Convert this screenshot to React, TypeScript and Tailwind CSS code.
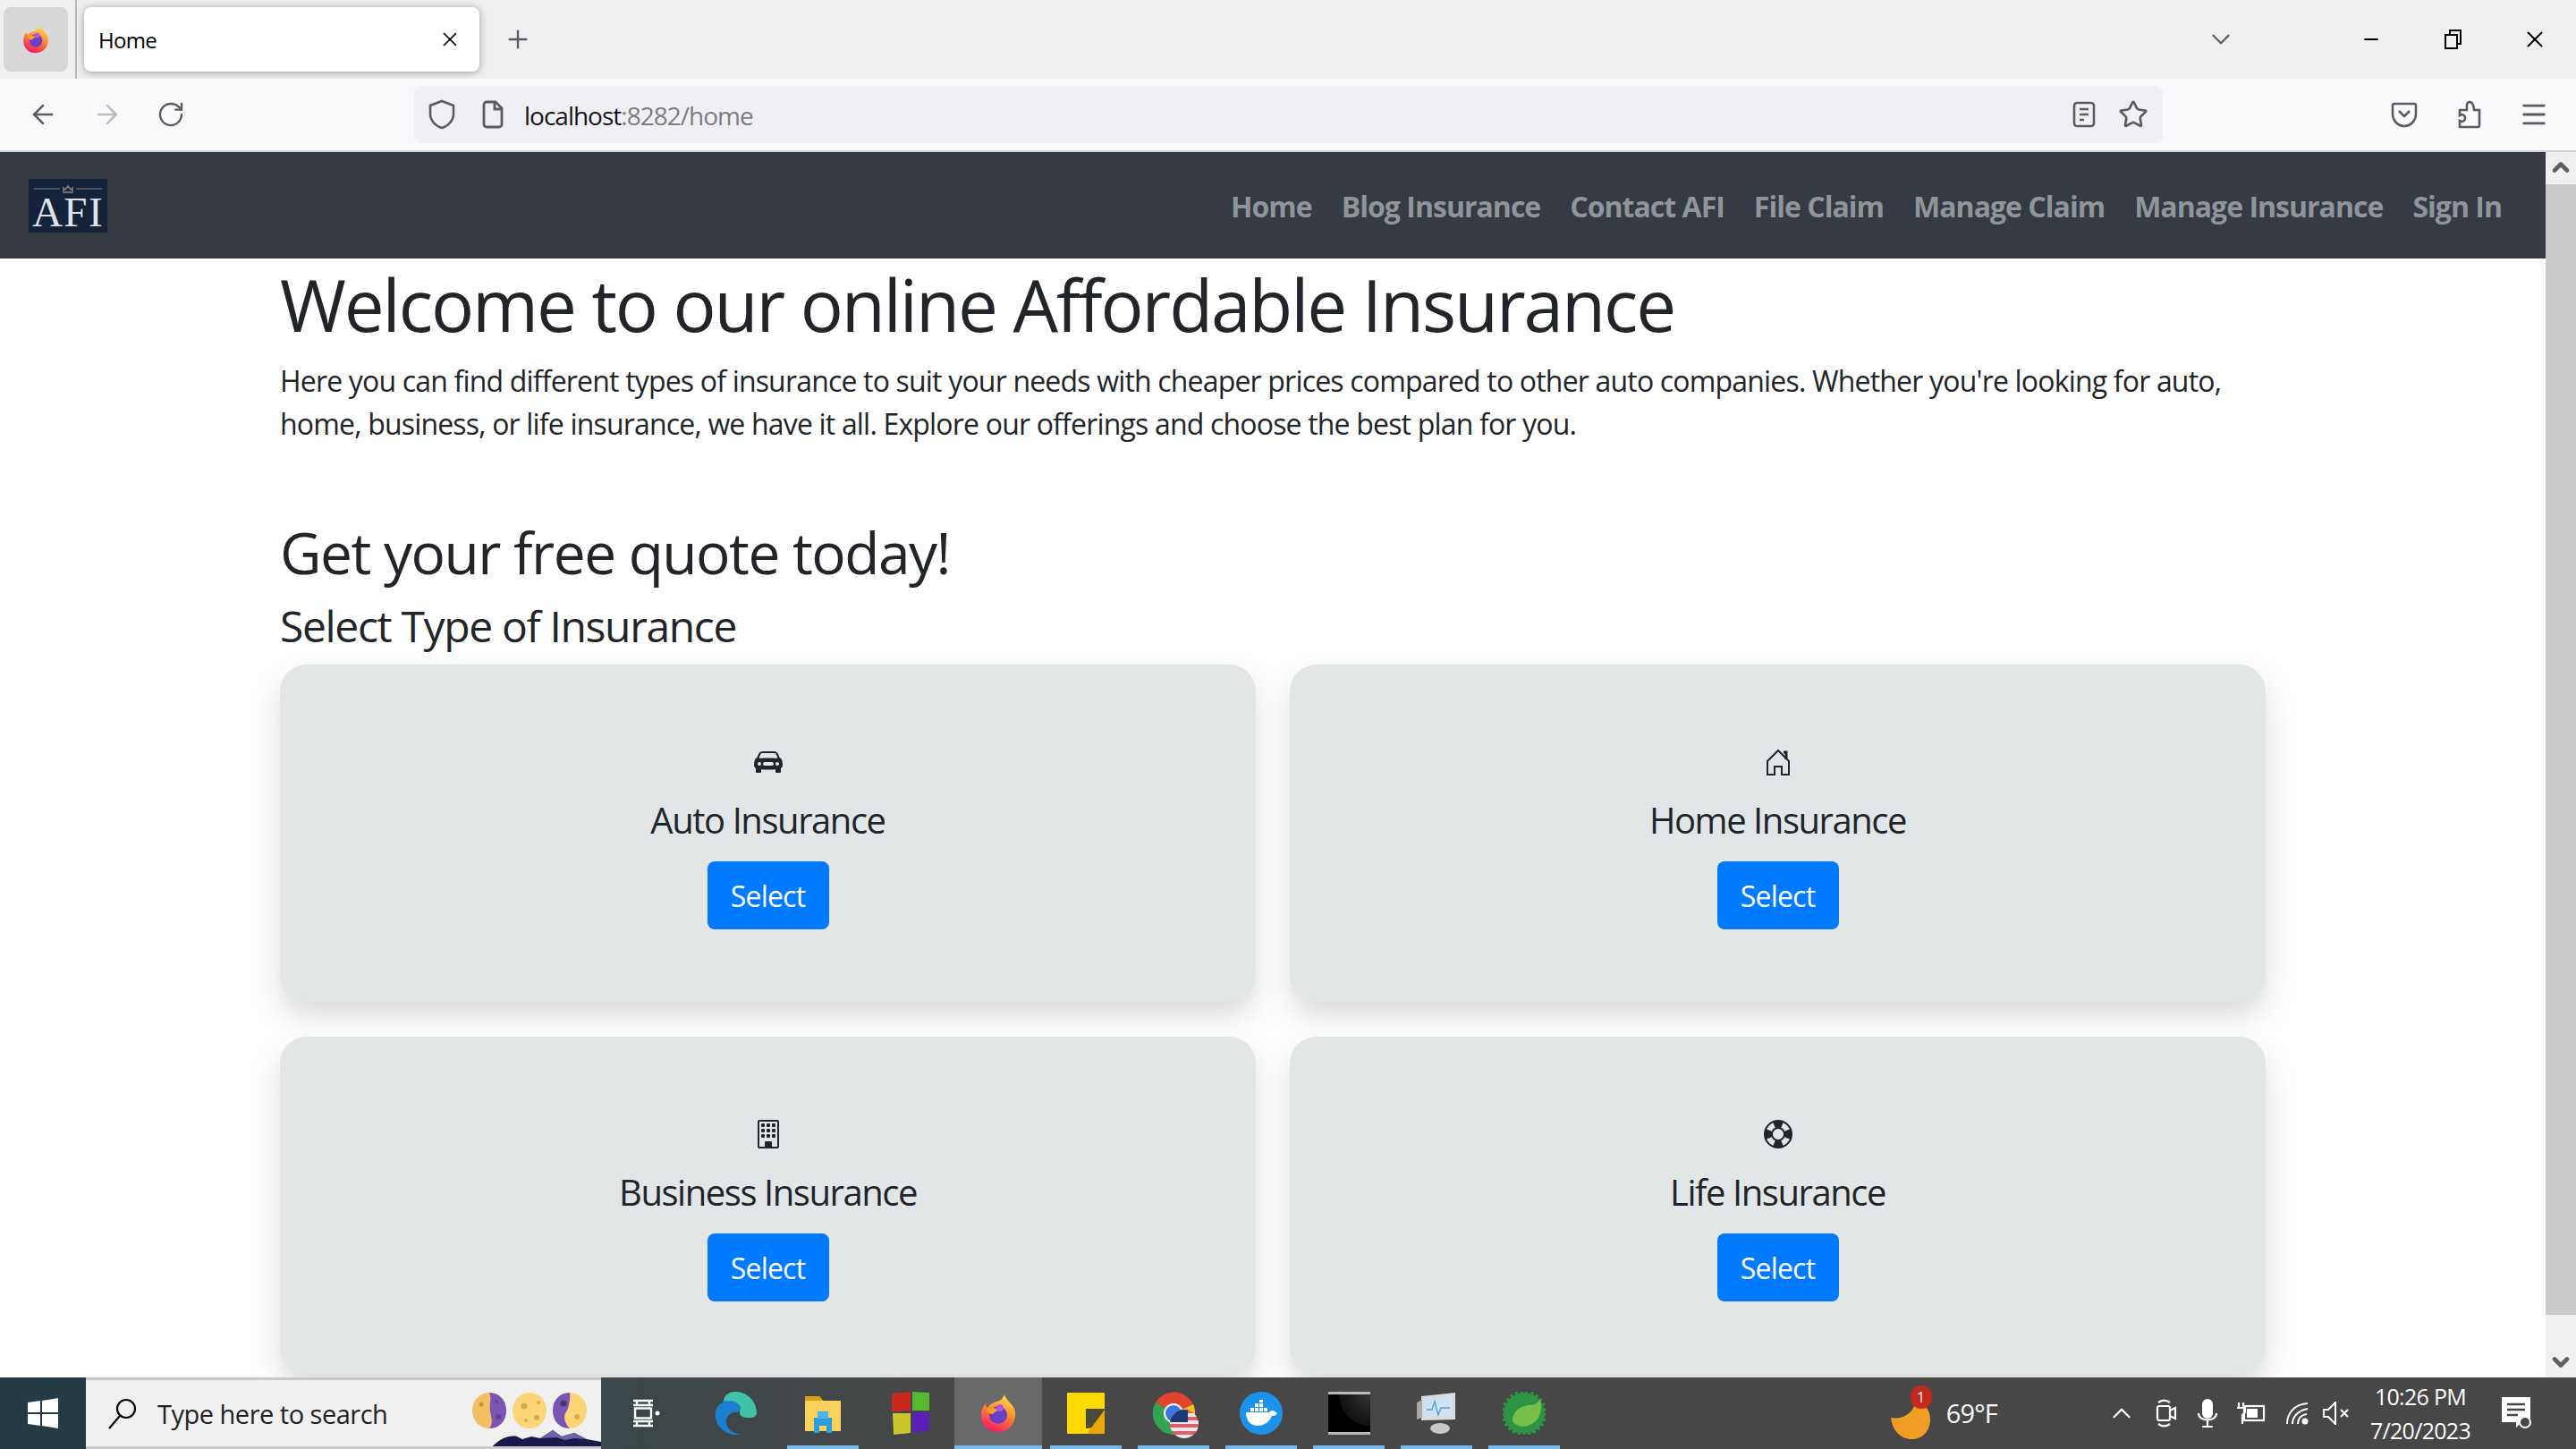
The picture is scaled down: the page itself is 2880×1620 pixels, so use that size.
import React from 'react';
import { ArrowLeft, ArrowRight, RotateCw, Plus, X, ChevronDown, ChevronUp, Minus, Star, Menu } from 'lucide-react';
import { BsCarFrontFill, BsBuilding, BsLifePreserver } from 'react-icons/bs';

const sans = "font-['Open_Sans','Noto_Sans',sans-serif]";

function FirefoxLogo({ size, id }: { size: number; id: string }) {
  return (
    <svg width={size} height={size} viewBox="0 0 44 44">
      <defs>
        <linearGradient id={id} x1="0.7" y1="0" x2="0.3" y2="1">
          <stop offset="0" stopColor="#ffe14a" />
          <stop offset="0.45" stopColor="#ff8a2a" />
          <stop offset="1" stopColor="#f5156c" />
        </linearGradient>
      </defs>
      <path d="M29 1c1 6 8 9 11 16 4 11-3 26-18 26C10 43 2 34 3 23c0-5 2-9 5-12 0 3 1 4 2 5 3-6 12-7 15-9 2-2 3-4 4-6z" fill={`url(#${id})`} />
      <circle cx="22" cy="24" r="10" fill="#6b3fc4" />
      <path d="M8 18c4-3 10-3 14 1-3 1-5 2-6 4-3 0-6-2-8-5z" fill="#ff9a2e" />
      <circle cx="24" cy="16" r="4" fill="#b05bd6" />
    </svg>
  );
}

// bootstrap house-door with the chimney, the react-icons one has lost it
function HouseIcon() {
  return (
    <svg width="32" height="32" viewBox="0 0 32 32" fill="none" stroke="#212529" strokeWidth="2">
      <path d="M16 3L4 15v15h8v-9h8v9h8V15z" />
      <path d="M22 5h3v8" strokeWidth="3" />
    </svg>
  );
}

function TaskCell({ children, active, running }: { children: React.ReactNode; active?: boolean; running?: boolean }) {
  return (
    <div className={`relative flex h-full w-[98px] items-center justify-center ${active ? 'bg-[#696969]' : ''}`}>
      {children}
      {running && <div className={`absolute bottom-0 h-[4px] bg-[#76b9ed] ${active ? 'left-0 w-full' : 'left-[9px] w-[80px]'}`} />}
    </div>
  );
}

function InsuranceCard({ icon, title }: { icon: React.ReactNode; title: string }) {
  return (
    <div className="flex h-[377px] flex-col items-center rounded-[30px] bg-[#e2e6e6] pt-[93px] shadow-[0_16px_32px_rgba(0,0,0,0.15)]">
      <div className="flex h-[32px] items-center text-[32px] text-[#212529]">{icon}</div>
      <h5 className="mt-[25px] text-[40px] leading-[48px] tracking-[-1.45px] text-[#212529]">{title}</h5>
      <button className="mt-[22px] h-[76px] w-[136px] rounded-[8px] bg-[#007bff] pt-[2px] text-[32px] tracking-[-0.8px] text-white">Select</button>
    </div>
  );
}

const navItems = ['Home', 'Blog Insurance', 'Contact AFI', 'File Claim', 'Manage Claim', 'Manage Insurance', 'Sign In'];

export default function App() {
  return (
    <div className={`flex h-[1620px] w-[2880px] flex-col overflow-hidden bg-white ${sans}`}>
      {/* tab strip */}
      <div className="flex h-[88px] shrink-0 items-center bg-[#efeff0]">
        <div className="ml-[4px] flex h-[72px] w-[72px] items-center justify-center rounded-[8px] bg-[#d8d8d8]">
          <FirefoxLogo size={32} id="ffTab" />
        </div>
        <div className="ml-[8px] h-full w-[2px] bg-[#b8b8b8]" />
        <div className="ml-[8px] flex h-[72px] w-[442px] items-center justify-between rounded-[8px] bg-white pl-[16px] pr-[20px] shadow-[0_1px_8px_rgba(0,0,0,0.35)]">
          <span className="pt-[1px] text-[24px] tracking-[-0.7px] text-black">Home</span>
          <X size={26} strokeWidth={1.6} className="text-black" />
        </div>
        <Plus size={32} strokeWidth={1.8} className="ml-[27px] text-[#5b5b66]" />
        <div className="flex-1" />
        <ChevronDown size={34} strokeWidth={1.6} className="mr-[139px] text-[#5b5b66]" />
        <Minus size={24} strokeWidth={2} className="mr-[68px] text-black" />
        <svg width="24" height="24" viewBox="0 0 24 24" fill="none" stroke="black" strokeWidth="2" className="mr-[64px]">
          <rect x="3" y="7" width="13" height="15" />
          <path d="M8 7V2h12v15h-4" />
        </svg>
        <X size={30} strokeWidth={1.6} className="mr-[31px] text-black" />
      </div>

      {/* toolbar */}
      <div className="flex h-[82px] shrink-0 items-center border-b-2 border-[#cfcfd2] bg-[#f9f9fb]">
        <ArrowLeft size={34} strokeWidth={1.8} className="ml-[31px] text-[#5b5b66]" />
        <ArrowRight size={34} strokeWidth={1.8} className="ml-[38px] text-[#bdbdc2]" />
        <RotateCw size={32} strokeWidth={1.8} className="ml-[38px] text-[#5b5b66]" />
        <div className="ml-[256px] flex h-[64px] w-[1955px] items-center rounded-[8px] bg-[#f0f0f4] pl-[15px] pr-[16px]">
          <svg width="32" height="34" viewBox="0 0 32 34" fill="none" stroke="#5b5b66" strokeWidth="2.6">
            <path d="M16 2l13 5v9c0 8-6 14-13 16C9 30 3 24 3 16V7z" />
          </svg>
          <svg width="26" height="32" viewBox="0 0 26 32" fill="none" stroke="#5b5b66" strokeWidth="2.8" className="ml-[28px]">
            <path d="M3 5a3 3 0 0 1 3-3h10l7 7v18a3 3 0 0 1-3 3H6a3 3 0 0 1-3-3z" />
            <path d="M15 2v8h8" />
          </svg>
          <span className="ml-[22px] pt-[2px] text-[28px] tracking-[-1px] text-[#15141a]">
            localhost<span className="text-[#7c7c84]">:8282/home</span>
          </span>
          <div className="flex-1" />
          <svg width="26" height="32" viewBox="0 0 26 32" fill="none" stroke="#5b5b66" strokeWidth="2.6">
            <rect x="2" y="3" width="22" height="26" rx="3" />
            <path d="M8 10h10M8 16h10M8 22h5" />
          </svg>
          <Star size={34} strokeWidth={1.9} className="ml-[25px] text-[#5b5b66]" />
        </div>
        <svg width="30" height="30" viewBox="0 0 30 30" fill="none" stroke="#5b5b66" strokeWidth="2.6" className="ml-[255px]">
          <path d="M4 3h22a2 2 0 0 1 2 2v9c0 8-6 14-13 14S2 22 2 14V5a2 2 0 0 1 2-2z" />
          <path d="M9 11l6 6 6-6" />
        </svg>
        <svg width="30" height="34" viewBox="0 0 30 34" fill="none" stroke="#5b5b66" strokeWidth="2.6" className="ml-[43px]">
          <path d="M4 31h20a2 2 0 0 0 2-2V12h-6c0-3-1-9-5-9s-3 6-3 9H4v6c3-2 6 0 6 3s-3 5-6 3z" />
        </svg>
        <Menu size={34} strokeWidth={2} className="ml-[40px] text-[#5b5b66]" />
      </div>

      {/* page + scrollbar */}
      <div className="flex min-h-0 flex-1">
        <div className="min-w-0 flex-1 overflow-hidden">
          <nav className="flex h-[119px] items-center justify-between bg-[#363a42] pl-[32px] pr-[49px]">
            <div className="flex h-[60px] w-[88px] flex-col items-center bg-[#15233a]">
              <svg width="76" height="12" viewBox="0 0 76 12" className="mt-[5px] shrink-0">
                <path d="M0 6h29M47 6h29" stroke="#5d6067" strokeWidth="1.4" />
                <path d="M33 10V5l2 2 3-4 3 4 2-2v5z" fill="none" stroke="#8b8678" strokeWidth="1.4" />
              </svg>
              <span className="font-['Liberation_Serif',serif] text-[47px] leading-[41px] tracking-[1.5px] text-[#dfe2e6]">AFI</span>
            </div>
            <div className="flex gap-[33px] pt-[2px]">
              {navItems.map((item) => (
                <a key={item} className="text-[32px] font-bold tracking-[-0.98px] text-[#90959a]">{item}</a>
              ))}
            </div>
          </nav>
          <main className="ml-[313px] w-[2220px] text-[#212529]">
            <h1 className="pt-[3px] text-[80px] leading-[96px] tracking-[-2.1px]">Welcome to our online Affordable Insurance</h1>
            <p className="mt-[14px] text-[32px] leading-[48px] tracking-[-0.82px]">
              Here you can find different types of insurance to suit your needs with cheaper prices compared to other auto companies. Whether you're looking for auto, home, business, or life insurance, we have it all. Explore our offerings and choose the best plan for you.
            </p>
            <h2 className="mt-[81px] text-[64px] leading-[77px] tracking-[-1.5px]">Get your free quote today!</h2>
            <h3 className="mt-[15px] text-[48px] leading-[58px] tracking-[-1.35px]">Select Type of Insurance</h3>
            <div className="mt-[14px] grid grid-cols-2 gap-x-[38px] gap-y-[39px]">
              <InsuranceCard icon={<BsCarFrontFill />} title="Auto Insurance" />
              <InsuranceCard icon={<HouseIcon />} title="Home Insurance" />
              <InsuranceCard icon={<BsBuilding />} title="Business Insurance" />
              <InsuranceCard icon={<BsLifePreserver />} title="Life Insurance" />
            </div>
          </main>
        </div>
        <div className="flex w-[34px] shrink-0 flex-col items-center justify-between bg-[#f0f0f0]">
          <div className="flex h-[34px] w-full items-center justify-center"><ChevronUp size={28} strokeWidth={4} className="text-[#606060]" /></div>
          <div className="mb-[34px] h-[1264px] w-full bg-[#c9c9c9]" />
          <div className="flex h-[34px] w-full items-center justify-center"><ChevronDown size={28} strokeWidth={4} className="text-[#606060]" /></div>
        </div>
      </div>

      {/* taskbar */}
      <div className="flex h-[80px] shrink-0 items-center bg-[linear-gradient(90deg,#33474d_0,#3b4649_720px,#474747_1060px)]">
        <div className="flex h-full w-[96px] items-center justify-center bg-[#253a42]">
          <svg width="34" height="34" viewBox="0 0 34 34" fill="white"><path d="M0 5l14-2v13H0zM16 3l18-3v16H16zM0 18h14v13L0 29zM16 18h18v16l-18-3z" /></svg>
        </div>
        <div className="relative flex h-full w-[576px] items-center overflow-hidden border-y-[3px] border-[#c9c9c9] bg-[#f0f0f0] pl-[24px]">
          <svg width="34" height="36" viewBox="0 0 34 36" fill="none" stroke="black" strokeWidth="2.2">
            <circle cx="21" cy="13" r="10" />
            <path d="M14 21L2 35" />
          </svg>
          <span className="ml-[22px] pt-[2px] text-[29px] tracking-[-0.5px] text-[#222]">Type here to search</span>
          <svg width="146" height="80" viewBox="0 0 146 80" className="absolute right-0 top-[-3px]">
            <ellipse cx="21" cy="37" rx="19" ry="20" fill="#f2bf67" />
            <path d="M21 17c12 0 19 9 19 20s-7 20-19 20c5-6 2-12 1-20-1-8 2-14-1-20z" fill="#7b55b4" />
            <circle cx="12" cy="30" r="2.5" fill="#c98f3f" /><circle cx="31" cy="44" r="3" fill="#5f4096" /><circle cx="29" cy="27" r="2" fill="#5f4096" />
            <ellipse cx="66" cy="37" rx="19" ry="20" fill="#fbd576" />
            <circle cx="60" cy="32" r="3.5" fill="#dca752" /><circle cx="74" cy="45" r="3" fill="#dca752" /><circle cx="76" cy="28" r="2" fill="#dca752" /><circle cx="62" cy="48" r="2" fill="#dca752" />
            <ellipse cx="111" cy="37" rx="19" ry="20" fill="#fbd576" />
            <path d="M111 17c-12 0-19 9-19 20s7 20 19 20c-6-6-8-14-3-20 2-4 4-14 3-20z" fill="#7b55b4" />
            <circle cx="104" cy="29" r="3.5" fill="#4a3272" /><circle cx="119" cy="44" r="3" fill="#dca752" />
            <path d="M22 80c8-10 20-16 30-14l6 3 10-3 10 2 14-9 10 7 14-4 14 7 16 3v8z" fill="#191a4b" />
            <path d="M78 68l14-9 10 7 14-4 14 7-14-1-10 2-10-3z" fill="#6d61a8" />
          </svg>
        </div>
        <div className="flex h-full w-[101px] items-center justify-center">
          <svg width="32" height="32" viewBox="0 0 32 32" fill="none" stroke="white" strokeWidth="2.4">
            <path d="M1 2h22M1 7h22M5 2v5M19 2v5M1 25h22M1 30h22M5 25v5M19 25v5" />
            <rect x="3" y="10.500" width="18" height="11" />
            <circle cx="28" cy="16" r="2.500" fill="white" stroke="none" />
          </svg>
        </div>
        <TaskCell>
          <svg width="48" height="48" viewBox="0 0 48 48">
            <path d="M24 0c13 0 24 10 24 24 0 3-3 5-8 5-8 0-11-2-11-6 0-6-8-9-15-5C7 8 14 0 24 0z" fill="#3fc2a6" />
            <path d="M2 22C5 10 20 6 29 15c3 4 0 8-4 8-7 0-11 4-11 11s6 12 17 14C14 50 0 40 2 22z" fill="#1b7fd1" />
          </svg>
        </TaskCell>
        <TaskCell running>
          <svg width="44" height="46" viewBox="0 0 44 46">
            <path d="M2 4h16l4 5h20v34H2z" fill="#f9d25e" />
            <path d="M2 4h16l4 5H2z" fill="#d9a013" />
            <path d="M12 28h20v17h-6v-8h-8v8h-6z" fill="#2c9ce0" />
            <rect x="16" y="21" width="12" height="8" fill="#4fb3ea" />
          </svg>
        </TaskCell>
        <TaskCell>
          <svg width="44" height="48" viewBox="0 0 44 48">
            <path d="M1 2l21-2v21l-21 1z" fill="#c8281c" />
            <path d="M24 0l19 1v20H24z" fill="#56b82e" />
            <path d="M2 24h20v22L3 48z" fill="#c9c72e" />
            <path d="M24 23h19v20l-19 3z" fill="#5a1fb8" />
          </svg>
        </TaskCell>
        <TaskCell active running><FirefoxLogo size={44} id="ffTask" /></TaskCell>
        <TaskCell running>
          <svg width="42" height="46" viewBox="0 0 42 46">
            <rect width="42" height="46" rx="1" fill="#ffd900" />
            <path d="M21 38V40L42 38V18H21z" fill="#4a4a3a" />
            <path d="M22 46l20-27v27z" fill="#e8a800" />
          </svg>
        </TaskCell>
        <TaskCell running>
          <div className="relative h-[48px] w-[48px]">
            <svg width="48" height="48" viewBox="0 0 48 48" className="absolute left-0 top-0">
              <path d="M24 24L4 12A24 24 0 0 1 46 14z" fill="#e0442f" />
              <path d="M24 24L46 14A24 24 0 0 1 26 48z" fill="#f4c01b" />
              <path d="M24 24L26 48A24 24 0 0 1 4 12z" fill="#32a350" />
              <circle cx="24" cy="24" r="11" fill="#fff" />
              <circle cx="24" cy="24" r="9" fill="#3a78e0" />
            </svg>
            <div className="absolute left-[20px] top-[20px] h-[32px] w-[32px] overflow-hidden rounded-full bg-[repeating-linear-gradient(180deg,#d9606e_0,#d9606e_4px,#f2e4e4_4px,#f2e4e4_8px)]">
              <div className="h-[14px] w-[20px] bg-[#1d3a74]" />
            </div>
          </div>
        </TaskCell>
        <TaskCell running>
          <div className="flex h-[48px] w-[48px] items-center justify-center rounded-full bg-[#1d92ea]">
            <svg width="36" height="30" viewBox="0 0 36 30" fill="white">
              <path d="M1 14h26c1-2 4-3 6-1 1 1 3 1 3 2-2 3-4 3-6 3-3 7-9 11-16 11C7 29 1 24 1 14z" />
              <path d="M6 9h4v4H6zM11 9h4v4h-4zM16 9h4v4h-4zM11 4h4v4h-4zM16 4h4v4h-4zM16 0h4v3h-4zM21 9h4v4h-4z" />
            </svg>
          </div>
        </TaskCell>
        <TaskCell running>
          <div className="h-[48px] w-[47px] border-y-[3px] border-[#b9b9b9] bg-[radial-gradient(circle_at_100%_0%,#333_0,#111_55%,#000_56%)]" />
        </TaskCell>
        <TaskCell running>
          <svg width="46" height="48" viewBox="0 0 46 48">
            <path d="M6 5l38-4v30L6 32z" fill="#d8dde2" />
            <path d="M10 9l30-3v21l-30 2z" fill="#cfe2f1" />
            <path d="M12 20h6l3-9 4 15 3-8h10" fill="none" stroke="#5a9fd0" strokeWidth="1.4" />
            <ellipse cx="27" cy="41" rx="11" ry="6" fill="#c8c8c8" />
            <path d="M1 12l6-3v20l-6 2z" fill="#a9a9a9" />
          </svg>
        </TaskCell>
        <TaskCell running>
          <svg width="48" height="48" viewBox="0 0 48 48">
            <circle cx="24" cy="24" r="23" fill="#2d9444" />
            <circle cx="24" cy="24" r="24" fill="none" stroke="#2d9444" strokeWidth="3" strokeDasharray="3 3" />
            <path d="M42 8c3 14-1 26-14 30-7 2-13 0-17-5 0-12 10-18 20-18 5 0 9-3 11-7z" fill="#77bf4b" />
          </svg>
        </TaskCell>
        <div className="flex-1" />
        <div className="relative mr-[18px] h-[50px] w-[44px]">
          <svg width="44" height="46" viewBox="0 0 44 46" className="absolute bottom-[-6px] left-0">
            <path d="M0 20c10 2 24-2 28-18 8 0 16 8 16 20 0 14-10 22-20 22C10 44 2 34 0 20z" fill="#f09c25" />
          </svg>
          <div className="absolute right-[-2px] top-[-6px] flex h-[26px] w-[24px] items-center justify-center rounded-full bg-[#c5281c] text-[16px] leading-none text-white">1</div>
        </div>
        <span className="mr-[122px] text-[29px] tracking-[-0.8px] text-white">69°F</span>
        <ChevronUp size={34} strokeWidth={1.6} className="mr-[21px] text-white" />
        <svg width="24" height="32" viewBox="0 0 24 32" fill="none" stroke="white" strokeWidth="2.2" className="mr-[22px]">
          <rect x="2" y="8" width="14" height="16" rx="2" /><path d="M16 13l6-3v12l-6-3M3 4c4-3 9-3 13 0M3 28c4 3 9 3 13 0" />
        </svg>
        <svg width="24" height="32" viewBox="0 0 24 32" fill="white" className="mr-[20px]">
          <rect x="6" y="0" width="12" height="22" rx="6" />
          <path d="M2 16c0 10 20 10 20 0M12 24v6M6 31h12" fill="none" stroke="white" strokeWidth="2.2" />
        </svg>
        <svg width="34" height="24" viewBox="0 0 34 24" fill="none" stroke="white" strokeWidth="2.2" className="mr-[21px]">
          <rect x="9" y="4" width="22" height="16" /><rect x="12" y="7" width="12" height="10" fill="white" stroke="none" />
          <path d="M3 0v5M8 0v5M1 6h9v5l-3 3v10" />
        </svg>
        <svg width="27" height="26" viewBox="0 0 27 26" fill="none" stroke="white" strokeWidth="2" className="mr-[14px]">
          <path d="M2 25C2 13 10 3 25 2M8 25c0-8 6-15 17-17M14 25c0-5 3-10 10-11" />
          <circle cx="22" cy="22" r="3.500" fill="white" stroke="none" />
        </svg>
        <svg width="32" height="26" viewBox="0 0 32 26" fill="none" stroke="white" strokeWidth="2" className="mr-[24px]">
          <path d="M2 9h5l8-8v24l-8-8H2zM21 9l8 8M29 9l-8 8" />
        </svg>
        <div className="mr-[37px] flex w-[108px] flex-col items-center text-[25px] leading-[38px] tracking-[-0.7px] text-white">
          <span className="whitespace-nowrap">10:26 PM</span>
          <span className="whitespace-nowrap">7/20/2023</span>
        </div>
        <svg width="34" height="36" viewBox="0 0 34 36" className="mr-[49px]">
          <path d="M0 0h32v28H22l-6 6v-6H0z" fill="white" />
          <path d="M6 8h20M6 14h20M6 20h12" stroke="#474747" strokeWidth="2.4" />
          <circle cx="26" cy="28" r="6" fill="#474747" stroke="white" strokeWidth="2" />
        </svg>
      </div>
    </div>
  );
}
